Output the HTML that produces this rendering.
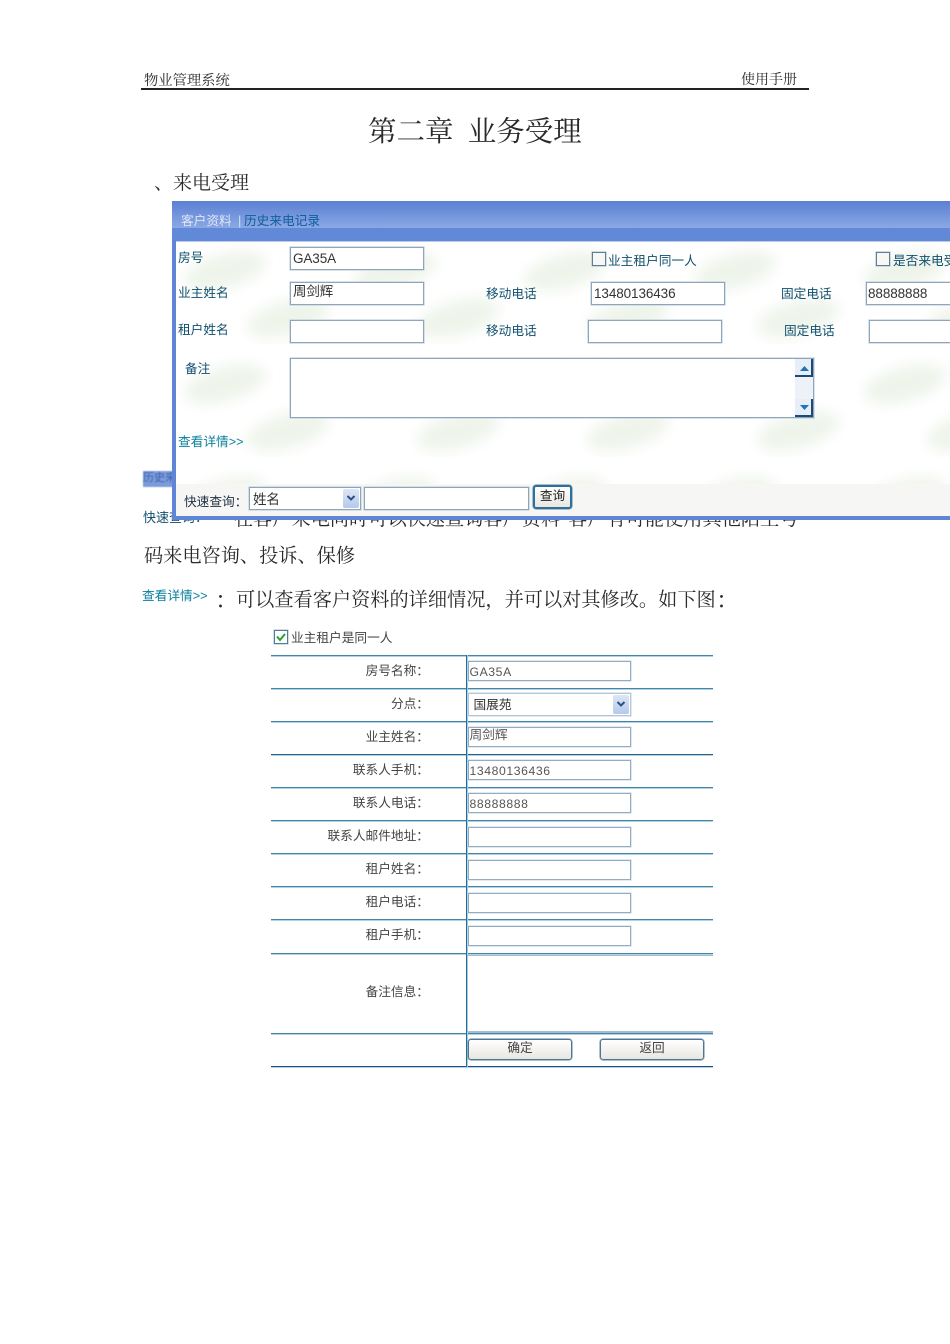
<!DOCTYPE html>
<html lang="zh"><head><meta charset="utf-8"><title>物业管理系统</title>
<style>
html,body{margin:0;padding:0;background:#fff}
#p{position:relative;width:950px;height:1344px;overflow:hidden;background:#fff}
#p div{position:absolute;white-space:nowrap}
.s{font-family:"Liberation Serif","Noto Serif CJK SC",serif;color:#2a2a2a;line-height:1}
.c{font-family:"Noto Sans CJK TC",sans-serif;font-size:19px;color:#2a2a2a}
.t{font-family:"Liberation Sans","Noto Sans CJK TC",sans-serif;font-size:12.7px;line-height:14px;color:#0f4f6e;filter:blur(.35px)}
.g{font-family:"Liberation Sans","Noto Sans CJK TC",sans-serif;font-size:12.7px;line-height:14px;color:#444;text-align:right;filter:blur(.35px)}
.i{box-sizing:border-box;background:#fff;border:1px solid #8fa5b9;box-shadow:0 0 0 .6px #c3d0dc;font-family:"Liberation Sans","Noto Sans CJK SC",sans-serif;font-size:13.5px;letter-spacing:-.1px;color:#333;padding-left:2px;line-height:21px;height:23px;width:134px;filter:blur(.3px)}
.f{box-sizing:border-box;background:#fff;border:1px solid #93acc2;box-shadow:0 0 0 .6px #cddae5;height:20px;width:164px;left:468px;font-family:"Liberation Sans","Noto Sans CJK SC",sans-serif;font-size:12.2px;letter-spacing:.6px;color:#555;padding-left:1px;line-height:20px;filter:blur(.3px)}
.l{left:271px;width:442px;height:1px;background:#3f87ac;box-shadow:0 1px 0 #b5d0df}
.cb{box-sizing:border-box;width:14px;height:14px;border:1px solid #5f7d96;box-shadow:0 0 0 .5px #a9bbca;background:#f7f7f4}
.b{box-sizing:border-box;background:linear-gradient(#fff,#e8e6e0);border:1px solid #4f7590;box-shadow:0 0 0 .6px #7d9bb0;border-radius:3px;font-family:"Liberation Sans","Noto Sans CJK SC",sans-serif;font-size:12.7px;color:#444;text-align:center;line-height:17px;filter:blur(.25px)}
</style></head><body><div id="p">

<div class="s" style="left:144px;top:74px;font-size:14.3px">物业管理系统</div>
<div class="s" style="left:741px;top:74px;font-size:14px">使用手册</div>
<div style="left:141px;top:88px;width:668px;height:2px;background:#222"></div>
<div class="s" style="left:368px;top:119px;font-size:28.5px">第二章&nbsp;&nbsp;业务受理</div>
<div class="s" style="left:154px;top:174px;font-size:19px">、来电受理</div>

<div style="left:143px;top:471px;width:32px;height:16px;background:#7c9bdb;overflow:hidden;color:#3a63a8;font:11px/15px 'Liberation Sans','Noto Sans CJK SC',sans-serif;filter:blur(.4px)">历史来</div>
<div class="t" style="left:143px;top:511px;font-size:13px">快速查询：</div>
<div class="s" style="left:234px;top:510px;font-size:19.2px">在客户来电同时可以快速查询客户资料<span style="display:inline-block;width:8px"></span>客户有可能使用其他陌生号</div>

<!-- panel -->
<div style="left:172px;top:201px;width:778px;height:319px;background:#5f86d6;overflow:hidden">
  <div style="left:0;top:0;width:778px;height:27px;background:linear-gradient(#5b80d3,#8aa8e4)"></div>
  <div style="left:0;top:27px;width:778px;height:13px;background:#6288d8"></div>
  <div style="left:4px;top:40px;width:774px;height:275px;background:#fff;border-top:1px solid #b9cbe6;box-sizing:border-box;overflow:hidden">
    <svg width="774" height="275" style="position:absolute;left:0;top:0" xmlns="http://www.w3.org/2000/svg">
      <defs>
        <filter id="bl" x="-40%" y="-80%" width="180%" height="260%"><feGaussianBlur stdDeviation="7"/></filter>
        <pattern id="lf" x="-31" y="-11" width="170" height="113" patternUnits="userSpaceOnUse">
          <g filter="url(#bl)" fill="#eef4ea">
            <ellipse cx="80" cy="40" rx="42" ry="17" transform="rotate(-15 80 40)"/>
            <ellipse cx="143" cy="87" rx="42" ry="17" transform="rotate(-15 143 87)"/>
            <ellipse cx="-27" cy="87" rx="42" ry="17" transform="rotate(-15 -27 87)"/>
          </g>
        </pattern>
      </defs>
      <rect width="774" height="275" fill="url(#lf)"/>
    </svg>
    <div style="left:0;top:242px;width:774px;height:33px;background:#f6f6f5"></div>
  </div>
  <div style="left:0;top:315px;width:778px;height:4px;background:#5f86d6"></div>
</div>
<div class="t" style="left:181px;top:214px;color:#dfe7f7">客户资料</div>
<div class="t" style="left:238px;top:214px;color:#cfe0f5">|</div>
<div class="t" style="left:244px;top:214px;color:#0c5f9a">历史来电记录</div>

<div class="t" style="left:178px;top:251px">房号</div>
<div class="t" style="left:178px;top:286px">业主姓名</div>
<div class="t" style="left:178px;top:323px">租户姓名</div>
<div class="t" style="left:185px;top:362px">备注</div>
<div class="t" style="left:178px;top:435px;color:#0a7f9c">查看详情&gt;&gt;</div>
<div class="t" style="left:486px;top:287px">移动电话</div>
<div class="t" style="left:486px;top:324px">移动电话</div>
<div class="t" style="left:781px;top:287px">固定电话</div>
<div class="t" style="left:784px;top:324px">固定电话</div>
<div class="cb" style="left:592px;top:252px"></div>
<div class="t" style="left:608px;top:254px">业主租户同一人</div>
<div class="cb" style="left:876px;top:252px"></div>
<div class="t" style="left:893px;top:254px">是否来电受理</div>

<div class="i" style="left:290px;top:247px">GA35A</div>
<div class="i" style="left:290px;top:282px;line-height:17px">周剑辉</div>
<div class="i" style="left:290px;top:320px"></div>
<div class="i" style="left:591px;top:282px">13480136436</div>
<div class="i" style="left:587.5px;top:320px"></div>
<div class="i" style="left:866px;top:282px;width:100px;padding-left:1px">88888888</div>
<div class="i" style="left:869px;top:320px;width:100px"></div>

<div class="i" style="left:290px;top:358px;width:524px;height:60px"></div>
<div style="left:795px;top:359px;width:18px;height:58px;background:#eef2f8"></div>
<div style="left:795px;top:359px;width:18px;height:18px;box-sizing:border-box;background:#e6eef8;border-right:2px solid #1b4a78;border-bottom:2px solid #1b4a78"></div>
<div style="left:795px;top:399px;width:18px;height:18px;box-sizing:border-box;background:#e6eef8;border-right:2px solid #1b4a78;border-bottom:2px solid #1b4a78"></div>
<svg width="950" height="1344" style="position:absolute;left:0;top:0;pointer-events:none" xmlns="http://www.w3.org/2000/svg">
  <path d="M800 371h9l-4.500-5z" fill="#1f74b8"/>
  <path d="M800 405h9l-4.500 5z" fill="#1f74b8"/>
</svg>

<div class="t" style="left:184px;top:495px;color:#234">快速查询：</div>
<div class="i" style="left:249px;top:487px;width:112px;height:23px;line-height:23px;padding-left:3px">姓名</div>
<div style="left:343px;top:489px;width:16px;height:19px;background:linear-gradient(#dde6f6,#b5c9ea);border-radius:2px"></div>
<svg width="16" height="19" style="position:absolute;left:343px;top:489px" xmlns="http://www.w3.org/2000/svg"><path d="M4.500 7l3.500 3.500 3.500-3.500" fill="none" stroke="#2c4f86" stroke-width="2"/></svg>
<div class="i" style="left:364px;top:487px;width:165px;height:23px"></div>
<div class="b" style="left:533px;top:485px;width:39px;height:24px;line-height:18px;color:#222;border-color:#2f6f9c;border-width:2px">查询</div>

<div class="s" style="left:144px;top:547px;font-size:19.2px">码来电咨询、投诉、保修</div>
<div class="t" style="left:142px;top:589px;color:#0a7f9c;font-size:12.7px">查看详情&gt;&gt;</div>
<div class="c" style="left:211px;top:589px;line-height:24px">：</div>
<div class="s" style="left:236px;top:591px;font-size:19.2px">可以查看客户资料的详细情况，并可以对其修改。如下图</div>
<div class="c" style="left:712px;top:589px;line-height:24px">：</div>

<!-- form -->
<div class="cb" style="left:274px;top:630px;border-color:#4f7f96;background:#fff"></div>
<svg width="14" height="14" style="position:absolute;left:274px;top:630px" xmlns="http://www.w3.org/2000/svg"><path d="M3 6.500l3 3.500 5-6" fill="none" stroke="#2f9d38" stroke-width="2"/></svg>
<div class="g" style="left:291px;top:631px;text-align:left">业主租户是同一人</div>

<div class="l" style="top:655px"></div><div class="l" style="top:688px"></div><div class="l" style="top:721px"></div>
<div class="l" style="top:754px;background:#23628f"></div><div class="l" style="top:787px"></div><div class="l" style="top:820px"></div>
<div class="l" style="top:853px"></div><div class="l" style="top:886px"></div><div class="l" style="top:919px"></div>
<div class="l" style="top:953px"></div><div class="l" style="top:1033px"></div><div class="l" style="top:1066px;background:#1f4f80"></div>
<div style="left:466px;top:655px;width:1px;height:412px;background:#1f6f9c;box-shadow:1px 0 0 #a9cadb"></div>

<div class="g" style="left:271px;width:158px;top:664px">房号名称：</div>
<div class="g" style="left:271px;width:158px;top:697px">分点：</div>
<div class="g" style="left:271px;width:158px;top:730px">业主姓名：</div>
<div class="g" style="left:271px;width:158px;top:763px">联系人手机：</div>
<div class="g" style="left:271px;width:158px;top:796px">联系人电话：</div>
<div class="g" style="left:271px;width:158px;top:829px">联系人邮件地址：</div>
<div class="g" style="left:271px;width:158px;top:862px">租户姓名：</div>
<div class="g" style="left:271px;width:158px;top:895px">租户电话：</div>
<div class="g" style="left:271px;width:158px;top:928px">租户手机：</div>
<div class="g" style="left:271px;width:158px;top:985px">备注信息：</div>

<div class="f" style="top:661px;left:467.500px;width:163.500px">GA35A</div>
<div class="f" style="top:693px;left:467.500px;width:163.500px;height:23px;padding-left:5px;line-height:22px;letter-spacing:0;font-size:12.7px;color:#333;border-color:#b5c6d8">国展苑</div>
<div style="left:613px;top:695px;width:16px;height:19px;background:linear-gradient(#dde6f6,#b5c9ea);border-radius:2px"></div>
<svg width="16" height="19" style="position:absolute;left:613px;top:695px" xmlns="http://www.w3.org/2000/svg"><path d="M4.500 7l3.500 3.500 3.500-3.500" fill="none" stroke="#2c4f86" stroke-width="2"/></svg>
<div class="f" style="top:727px;left:467.500px;width:163.500px;line-height:14px;letter-spacing:0;font-size:12.7px">周剑辉</div>
<div class="f" style="top:760px;left:467.500px;width:163.500px">13480136436</div>
<div class="f" style="top:793px;left:467.500px;width:163.500px">88888888</div>
<div class="f" style="top:827px;left:467.500px;width:163.500px"></div>
<div class="f" style="top:860px;left:467.500px;width:163.500px"></div>
<div class="f" style="top:893px;left:467.500px;width:163.500px"></div>
<div class="f" style="top:926px;left:467.500px;width:163.500px"></div>
<div style="left:468px;top:955px;width:245px;height:1px;background:#a9bccd"></div>
<div style="left:468px;top:1031px;width:245px;height:2px;background:#a9bccd"></div>
<div class="b" style="left:468px;top:1039px;width:104px;height:21px">确定</div>
<div class="b" style="left:600px;top:1039px;width:104px;height:21px">返回</div>

</div></body></html>
